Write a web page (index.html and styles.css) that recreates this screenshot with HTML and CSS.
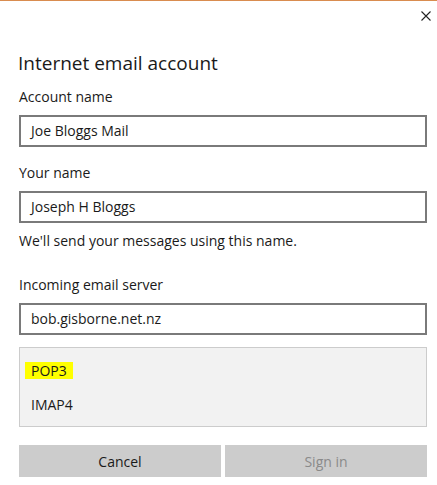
FILE: index.html
```html
<!DOCTYPE html>
<html lang="en">
<head>
    <meta charset="UTF-8">
    <title>Internet email account</title>
    <link rel="stylesheet" href="styles.css">
</head>
<body>

    <div class="titlebar">
        <button type="button" class="close" aria-label="Close">
            <svg width="10" height="10" viewBox="0 0 10 10"><path d="M0.5 0.5 L9.5 9.5 M9.5 0.5 L0.5 9.5" stroke="#222" stroke-width="1.1" fill="none"/></svg>
        </button>
    </div>

    <div class="dialog">
        <h1>Internet email account</h1>

        <label class="field-label">Account name</label>
        <div class="textbox">Joe Bloggs Mail</div>

        <label class="field-label">Your name</label>
        <div class="textbox">Joseph H Bloggs</div>
        <p class="hint">We'll send your messages using this name.</p>

        <label class="field-label server">Incoming email server</label>
        <div class="textbox">bob.gisborne.net.nz</div>

        <div class="dropdown">
            <div class="option"><span class="highlight">POP3</span></div>
            <div class="option">IMAP4</div>
        </div>

        <div class="buttons">
            <button type="button" class="btn">Cancel</button>
            <button type="button" class="btn disabled">Sign in</button>
        </div>
    </div>

</body>
</html>
```

FILE: styles.css
```css
body {
    font-family: 'Open Sans', sans-serif;
    margin: 0;
    padding: 0;
    background-color: #ffffff;
    color: #1a1a1a;
    border-top: 1px solid #d98c4f;
}
.titlebar {
    height: 30px;
    display: flex;
    justify-content: flex-end;
    align-items: center;
    padding-right: 6px;
}
.close {
    background: none;
    border: none;
    padding: 0;
    width: 10px;
    height: 10px;
    display: flex;
    margin-top: 0;
}
.dialog {
    padding: 0 10px 0 19px;
}
h1 {
    font-size: 19px;
    font-weight: normal;
    line-height: 26px;
    margin: 19px 0 11px -1px;
}
.field-label {
    display: block;
    font-size: 14px;
    line-height: 20px;
    margin-bottom: 8px;
}
.textbox {
    border: 2px solid #7a7a7a;
    height: 28px;
    line-height: 27px;
    font-size: 14px;
    padding: 0 10px;
    margin-bottom: 16px;
}
.hint {
    font-size: 14px;
    line-height: 20px;
    margin: -8px 0 0 0;
}
.server {
    margin-top: 24px;
}
.dropdown {
    background-color: #f2f2f2;
    border: 1px solid #cccccc;
    padding: 14px 0 13px 0;
    margin-top: -4px;
}
.option {
    font-size: 14px;
    line-height: 17px;
    padding: 0 5px;
    margin-bottom: 17px;
}
.option:last-child {
    margin-bottom: 0;
}
.highlight {
    background-color: #ffff00;
    padding: 0 6px;
    display: inline-block;
}
.option:last-child {
    padding-left: 11px;
}
.buttons {
    display: flex;
    gap: 4px;
    margin-top: 18px;
}
.btn {
    flex: 1;
    height: 32px;
    border: none;
    background-color: #cccccc;
    font-family: 'Open Sans', sans-serif;
    font-size: 14px;
    color: #1a1a1a;
    padding: 0;
}
.btn.disabled {
    color: #8a8a8a;
}
```
